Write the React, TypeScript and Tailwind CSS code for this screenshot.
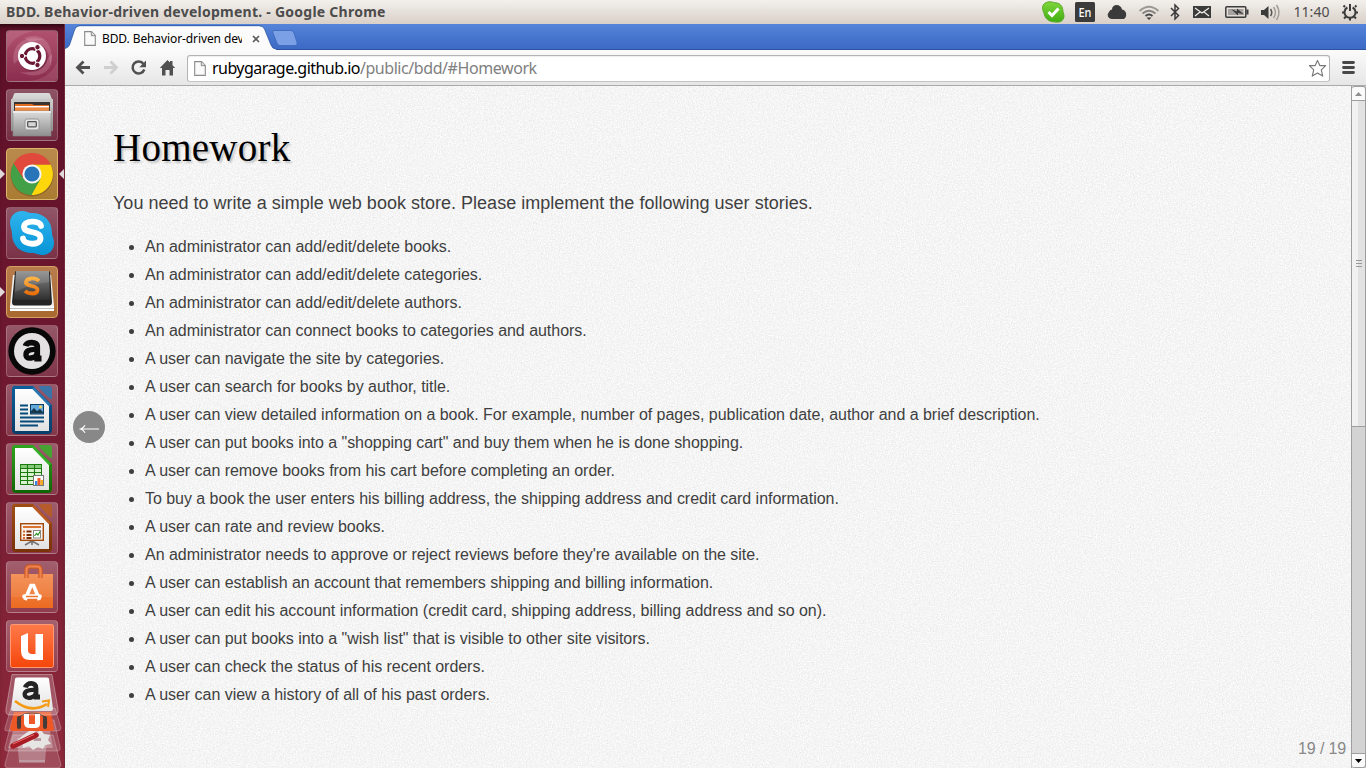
import React from "react";

const stories = [
  "An administrator can add/edit/delete books.",
  "An administrator can add/edit/delete categories.",
  "An administrator can add/edit/delete authors.",
  "An administrator can connect books to categories and authors.",
  "A user can navigate the site by categories.",
  "A user can search for books by author, title.",
  "A user can view detailed information on a book. For example, number of pages, publication date, author and a brief description.",
  "A user can put books into a \"shopping cart\" and buy them when he is done shopping.",
  "A user can remove books from his cart before completing an order.",
  "To buy a book the user enters his billing address, the shipping address and credit card information.",
  "A user can rate and review books.",
  "An administrator needs to approve or reject reviews before they're available on the site.",
  "A user can establish an account that remembers shipping and billing information.",
  "A user can edit his account information (credit card, shipping address, billing address and so on).",
  "A user can put books into a \"wish list\" that is visible to other site visitors.",
  "A user can check the status of his recent orders.",
  "A user can view a history of all of his past orders.",
];

function Gradients() {
  const list: [string, string, string][] = [
    ["gGray", "#dcdcdc", "#8f8f8f"],
    ["gSkype", "#2fb4ee", "#0794d6"],
    ["gSub", "#8a8a8a", "#2e2e2e"],
    ["gOrange", "#ffb347", "#e8700c"],
    ["gBlue", "#0a5f9c", "#073e68"],
    ["gGreen", "#2fa51c", "#106604"],
    ["gBrown", "#a04e14", "#7a3206"],
    ["gPaper", "#ffffff", "#e2e2e2"],
    ["gBag", "#f28a4d", "#ec6a22"],
    ["gUone", "#ff7a4a", "#f4460b"],
    ["gSkypeG", "#7fd63c", "#3fae12"],
    ["gDash", "#b0526f", "#8b2d4e"],
  ];
  return (
    <svg className="absolute size-0" aria-hidden="true">
      <defs>
        {list.map(([id, a, b]) => (
          <linearGradient id={id} key={id} x1="0" y1="0" x2="0" y2="1">
            <stop offset="0" stopColor={a} />
            <stop offset="1" stopColor={b} />
          </linearGradient>
        ))}
      </defs>
    </svg>
  );
}

const svg52 = "block size-[50px]";

function Dash() {
  return (
    <svg className={svg52} viewBox="1 1 50 50">
      <rect x="1" y="1" width="50" height="50" rx="3" fill="url(#gDash)" />
      <g fill="#f0c3d0" fillOpacity=".22">
        <path d="M8 34C4 14 20 4 38 10C26 9 14 16 12 30Z" />
        <path d="M18 8C38 0 50 16 44 36C45 22 38 12 24 12Z" />
        <path d="M46 24C48 44 30 50 14 42C28 44 40 38 42 28Z" />
        <path d="M1 1H28C16 3 6 9 1 20Z" fillOpacity=".14" />
        <path d="M51 51H22C36 50 46 44 51 32Z" fillOpacity=".14" />
      </g>
      <circle cx="27" cy="27" r="14.500" fill="#4a0d22" opacity=".35" />
      <circle cx="26" cy="26" r="14" fill="#fff" />
      <circle cx="26.500" cy="26" r="7.300" fill="none" stroke="#6b1834" strokeWidth="3.200" strokeDasharray="13.800 1.500" strokeDashoffset="6.900" />
      <g fill="#6b1834" stroke="#fff" strokeWidth="1"><circle cx="16" cy="26" r="2.700" /><circle cx="31.500" cy="17.200" r="2.700" /><circle cx="31.500" cy="35" r="2.700" /></g>
    </svg>
  );
}

function Files() {
  return (
    <svg className={svg52} viewBox="1 1 50 50">
      <path d="M8 5Q8 4 10 4H42Q44 4 44 5L47 13V42H5V13Z" fill="url(#gGray)" />
      <path d="M5 10H47V13H5Z" fill="#c7c7c7" />
      <rect x="8" y="13" width="36" height="11" fill="#3a3330" />
      <path d="M9 15H26L28 16H43V24H9Z" fill="#e26b22" />
      <rect x="9" y="17" width="34" height="1.500" fill="#fff" />
      <path d="M9 19H43V24H9Z" fill="#f08b45" />
      <path d="M7 22H45V47H7Z" fill="url(#gGray)" stroke="#8c8c8c" strokeWidth=".6" />
      <path d="M7 22H45V24H7Z" fill="#ececec" />
      <rect x="19" y="30" width="14" height="11" rx="2" fill="#e4e4e4" stroke="#969696" />
      <rect x="21.700" y="32.700" width="8.600" height="5.200" rx=".8" fill="#d7d7d7" stroke="#555" strokeWidth="1.300" />
    </svg>
  );
}

function ChromeLogo() {
  return (
    <svg className={svg52} viewBox="1 1 50 50">
      <circle cx="26" cy="27" r="21.500" fill="#5a3b10" opacity=".35" />
      <path d="M26 16.500H44.600A21 21 0 0 1 25 47L34.500 30.800Z" fill="#fdd60c" />
      <path d="M7.800 15.400A21 21 0 0 0 25.500 47L34.300 31 17.700 31Z" fill="#43a047" />
      <path d="M7.800 15.400L17.700 31 26 16.500H44.600A21 21 0 0 0 7.800 15.400Z" fill="#e1493c" />
      <circle cx="26" cy="26" r="9.600" fill="#f5f5f5" />
      <circle cx="26" cy="26" r="7.600" fill="#2874b8" />
    </svg>
  );
}

function Skype() {
  return (
    <svg className={svg52} viewBox="1 1 50 50">
      <path d="M16 4C20 4 22 6 26 6C38 6 46 14 46 26C46 29 48 31 48 36C48 43 43 48 37 48C32 48 30 46 26 46C14 46 6 38 6 27C6 23 4 20 4 16C4 9 9 4 16 4Z" fill="url(#gSkype)" />
      <path d="M35 19C34 13 18 13 18 20C18 27 35 23 34.500 31.500C34 39 18 38 17 31.500" fill="none" stroke="#fff" strokeWidth="5.800" strokeLinecap="round" />
    </svg>
  );
}

function Sublime() {
  return (
    <svg className={svg52} viewBox="1 1 50 50">
      <path d="M7 9H45L48 40V44H4V40Z" fill="#f1f1f1" />
      <path d="M4 40H48V45H4Z" fill="#fdfdfd" /><path d="M4 42.500H48" stroke="#aaa" strokeWidth=".8" />
      <path d="M9 6Q9 5 11 5H42Q44 5 44 6L46 36Q46 39.500 43 39.500H9Q6 39.500 6 36Z" fill="#242424" />
      <path d="M10 5H43L44 32Q44 34 42 34H10Q8 34 8 32Z" fill="url(#gSub)" />
      <path d="M10 5H43L43.500 16Q24 18 9 26Z" fill="#fff" opacity=".12" />
      <path d="M33 15C29 11 21 12 20 16C19 21 32 19 31.500 24C31 29 22 28 19 25" fill="none" stroke="url(#gOrange)" strokeWidth="3.800" />
    </svg>
  );
}

function DarkA() {
  return (
    <svg className={svg52} viewBox="1 1 50 50">
      <circle cx="26" cy="26" r="23.700" fill="#080808" />
      <circle cx="26" cy="26" r="18" fill="#e3e1e1" />
      <g fill="none" stroke="#0b0b0b"><path d="M19.500 21C20.500 16.500 31.700 16 31.200 22V33.500H35.500" strokeWidth="5.800" /><path d="M31 24.500C23 24 19.500 26 20 30.500C21 35 29 33 31 29.500" strokeWidth="5.400" /></g>
    </svg>
  );
}

function Doc({ fill, fold, children }: { fill: string; fold: string; children: React.ReactNode }) {
  return (
    <svg className={svg52} viewBox="1 1 50 50">
      <path d="M6 5Q6 2 9 2H27L46 21V46Q46 50 42 50H10Q6 50 6 46Z" fill={fill} />
      <path d="M9 5H27L43 22V47H9Z" fill="url(#gPaper)" />
      <path d="M27 4L44 21.500" stroke={fold} strokeWidth="2.500" />
      <path d="M33 2H43Q46 2 46 5V15Q44 15 42 13L34 5Q33 4 33 2Z" fill={fold} opacity=".85" />
      {children}
    </svg>
  );
}

function Writer() {
  return (
    <Doc fill="url(#gBlue)" fold="#2b79b3">
      <path d="M14 21.500H22M14 25.500H22M14 29.500H22M14 33.500H38M14 37.500H38M14 41.500H32" stroke="#074b7d" strokeWidth="1.900" />
      <rect x="24.500" y="20.500" width="13" height="9.500" fill="#63a8db" stroke="#093e65" />
      <path d="M25 29.500V27L28 24L31 27L34 25L37 28V29.500Z" fill="#16384f" /><circle cx="34.500" cy="23" r="1.400" fill="#ffd24d" />
    </Doc>
  );
}

function Calc() {
  return (
    <Doc fill="url(#gGreen)" fold="#38b028">
      <rect x="14.500" y="21.500" width="21" height="20" fill="#d9f3cf" stroke="#1b7a0e" />
      <path d="M14 22H36V25H14Z" fill="#38a12a" opacity=".5" />
      <path d="M14 25.500H36M14 29.500H36M14 33.500H36M14 37.500H36M21.500 21V42M28.500 21V42" stroke="#1b7a0e" strokeWidth="1.100" />
      <rect x="27.500" y="32.500" width="10" height="10" fill="#fff" stroke="#777" />
      <path d="M29 38H31.500V42H29Z" fill="#2e8be0" /><path d="M31.500 35H34.500V42H31.500Z" fill="#f0582b" /><path d="M34.500 37H37V42H34.500Z" fill="#f3ab1d" />
    </Doc>
  );
}

function Impress() {
  return (
    <Doc fill="url(#gBrown)" fold="#bb5c22">
      <path d="M26 39L19 43M26 39L33 43M26 39V43" stroke="#777" strokeWidth="1.700" />
      <rect x="14.700" y="21.700" width="22.600" height="16.600" fill="#faf1ea" stroke="#a1480d" strokeWidth="1.400" />
      <path d="M17 25H35" stroke="#d97331" strokeWidth="2" />
      <path d="M17 29.500H19M17 33H19M17 36H19" stroke="#d96a2b" strokeWidth="1.800" /><path d="M20.500 29.500H25.500M20.500 33H25.500M20.500 36H25.500" stroke="#7b2e05" strokeWidth="1.800" />
      <rect x="27.500" y="28.500" width="7" height="7.500" fill="#fff" stroke="#888" /><path d="M28.500 34L30.500 31.500L32 33L34 29.500" stroke="#2a9121" strokeWidth="1.200" fill="none" />
    </Doc>
  );
}

function Software() {
  return (
    <svg className={svg52} viewBox="1 1 50 50">
      <path d="M5 13H47V47H5Z" fill="url(#gBag)" />
      <path d="M5 13H47V36H5Z" fill="#fff" opacity=".08" />
      <path d="M20.500 17V9Q20.500 5.500 24 5.500H31Q34.500 5.500 34.500 9V17" fill="none" stroke="#cf5a22" strokeWidth="4.400" />
      <path d="M20.500 17V9Q20.500 5.500 24 5.500H31Q34.500 5.500 34.500 9V17" fill="none" stroke="#ec8350" strokeWidth="2.200" />
      <path d="M19 39L25 24.500H27.600L33.500 39" fill="none" stroke="#fff" strokeWidth="3.600" />
      <path d="M18.500 35.500H33.500" stroke="#fff" strokeWidth="4.600" strokeLinecap="round" /><path d="M20 35.500H32" stroke="#ed7330" strokeWidth="1.500" />
    </svg>
  );
}

function UbuntuOne() {
  return (
    <svg className={svg52} viewBox="1 1 50 50">
      <rect x="4.500" y="4.500" width="43" height="43" rx="2" fill="url(#gUone)" stroke="#ff9b72" />
      <path d="M15 16L22 13V30Q22 34 26 34H29.500V14H37V40H24Q15 40 15 31Z" fill="#fff" />
    </svg>
  );
}

function FoldedStack() {
  return (
    <svg className="block h-[96px] w-[65px]" viewBox="0 672 65 96">
      <g fill="#fff" fillOpacity=".16" stroke="#fff" strokeOpacity=".25">
        <path d="M13 735H53L61 765Q61 768 57 768H7Q4 767 5 764Z" />
        <path d="M12 720H54L60 747Q61 751 57 751H7Q4 751 5 747Z" />
        <path d="M11 708H55L61 728Q61 731 57 731H7Q4 731 5 728Z" />
      </g>
      <path d="M17 738H47L45 762H19Z" fill="#ddd" opacity=".35" /><path d="M19 760H45V763H19Z" fill="#ddd" opacity=".3" />
      <path d="M13 731H50L53 748H8Z" fill="#f5f5f5" opacity=".3" />
      <path d="M26 733L31 730L37 732L41 730L44 734L50 735L48 740L51 744L45 745L43 749L38 747L33 750L29 746L23 748L22 743L17 741L21 737Z" fill="#e7e5e4" /><path d="M33 738H41V741H34Z" fill="#b99aa1" />
      <path d="M13 746L36 735" stroke="#a81c25" strokeWidth="5.500" strokeLinecap="round" /><path d="M13 744L34 734.500" stroke="#ef6c68" strokeWidth="1" />
      <path d="M14 712H51L54 729Q54 731 52 731H12Q10 731 10 728Z" fill="#ee5726" />
      <path d="M20 727C14 722 19 713 32 713C45 713 50 722 44 727" fill="none" stroke="#433" strokeWidth="1.200" /><path d="M19 718V727M45 718V727" stroke="#453b39" strokeWidth="4" strokeLinecap="round" />
      <path d="M24 714H29V724H35V714H40V724Q40 728 35 728H30Q24 728 24 723Z" fill="#fff" />
      <path d="M12 674.500H52L58 709Q59 715 53 715H10Q5 715 6 709Z" fill="#fff" fillOpacity=".22" stroke="#fff" strokeOpacity=".35" />
      <path d="M15 679Q15 677.500 17 677.500H47Q49 677.500 49 679L53 709Q53 711 51 711H13Q11 711 11 709Z" fill="url(#gPaper)" />
      <g fill="none" stroke="#252525"><path d="M25.500 687.500C26.500 682 36.500 682 36 688V697H40" strokeWidth="4.800" /><path d="M36 690C27 689 23.500 692 25 696C28 700 34 697 36 694" strokeWidth="4.200" /></g>
      <path d="M15 701Q31 714 47 704" fill="none" stroke="#f59a13" strokeWidth="2.600" /><path d="M42 701.500L49 700.500L48 707" fill="none" stroke="#f59a13" strokeWidth="2" />
    </svg>
  );
}

type Item = { name: string; icon: () => React.ReactElement; bg: string; left?: boolean; right?: boolean };
const glass = "border-white/20 bg-white/12 bg-linear-to-b from-white/18 to-transparent";
const items: Item[] = [
  { name: "Dash", icon: Dash, bg: glass },
  { name: "Files", icon: Files, bg: glass },
  { name: "Chrome", icon: ChromeLogo, bg: "border-[#dcb76b] bg-linear-to-b from-[#ba8a4d] to-[#a97b32]", left: true, right: true },
  { name: "Skype", icon: Skype, bg: glass },
  { name: "Sublime Text", icon: Sublime, bg: "border-[#d7a064] bg-linear-to-b from-[#b87c4c] to-[#a8692f]", left: true },
  { name: "Editor", icon: DarkA, bg: glass },
  { name: "Writer", icon: Writer, bg: glass },
  { name: "Calc", icon: Calc, bg: glass },
  { name: "Impress", icon: Impress, bg: glass },
  { name: "Software Center", icon: Software, bg: glass },
  { name: "Ubuntu One", icon: UbuntuOne, bg: glass },
];

function Launcher() {
  return (
    <aside className="flex w-[65px] shrink-0 flex-col overflow-hidden border-r border-[#722a3c] bg-linear-to-b from-[#5d0f28] via-[#701a31] to-[#8e293b] pt-[6px] shadow-[inset_0_5px_5px_-3px_rgba(0,0,0,.6)]">
      <div className="flex flex-col gap-[7px]">
        {items.map(({ name, icon: Icon, bg, left, right }) => (
          <div key={name} className="flex h-[52px] items-center">
            <svg className="h-[10px] w-[6px]" viewBox="0 0 6 10">{left && <path d="M0 0L5 5L0 10Z" fill="#e2d9dc" />}</svg>
            <div className={`size-[52px] overflow-hidden rounded-[4px] border ${bg}`}><Icon /></div>
            <svg className="h-[10px] w-[6px]" viewBox="0 0 6 10">{right && <path d="M6 0L1 5L6 10Z" fill="#e2d9dc" />}</svg>
          </div>
        ))}
      </div>
      <FoldedStack />
    </aside>
  );
}

function TopBar() {
  return (
    <header className="flex h-6 shrink-0 items-center justify-between bg-linear-to-b from-[#f3f0ec] to-[#d9d0c8] pr-[7px] pl-[6px] font-['Noto_Sans',sans-serif] text-[#4c4c4c]">
      <div className="w-[400px] text-[14px] leading-6 font-bold tracking-[0.250px] whitespace-nowrap">BDD. Behavior-driven development. - Google Chrome</div>
      <div className="flex h-6 items-center">
        <svg className="block h-6 w-[317px]" viewBox="1042 0 317 24" fill="none">
          <path d="M1048 2C1051 1 1054 3 1057 3C1062 4 1063 9 1063 12C1066 18 1062 23 1056 22C1049 22 1045 19 1044 13C1041 7 1043 3 1048 2Z" fill="url(#gSkypeG)" stroke="#58a928" />
          <path d="M1048.500 12L1052 15.500L1058.500 8.500" stroke="#fff" strokeWidth="3" />
          <rect x="1075" y="2" width="20" height="20" rx="1.500" fill="#3b3b3b" />
          <text x="1085" y="17" textAnchor="middle" fontSize="12" textLength="13" lengthAdjust="spacingAndGlyphs" fontWeight="500" fill="#fff" fontFamily="Noto Sans, sans-serif">En</text>
          <path d="M1112 19A4 4 0 0 1 1109 12A4 4 0 0 1 1112 9.500C1112 3.500 1121 3.500 1122 9.500C1127 10 1127.500 17 1124 19Z" fill="#3b3b3b" />
          <g strokeWidth="1.800"><path d="M1139.500 11Q1149 2.500 1158.500 11" stroke="#9b9894" /><path d="M1142.500 13.500Q1149 8 1155.500 13.500" stroke="#858280" /><path d="M1145.500 16Q1149 13 1152.500 16" stroke="#444" /></g>
          <path d="M1146.500 17.500H1151.500L1149 20Z" fill="#3b3b3b" />
          <path d="M1171 8L1178.500 15.500L1175 19V5L1178.500 8.500L1171 16" stroke="#3b3b3b" strokeWidth="1.500" />
          <rect x="1193" y="6" width="18" height="12" fill="#3b3b3b" />
          <path d="M1195 8L1202 13L1209 8M1195 16L1200 12M1209 16L1204 12" stroke="#f4f1ed" strokeWidth="1.100" />
          <rect x="1225.800" y="6.800" width="20" height="10.500" rx="1" stroke="#3b3b3b" strokeWidth="1.500" /><rect x="1228" y="9" width="15.500" height="6" fill="#a5a29f" /><rect x="1246.500" y="9.500" width="2" height="5" fill="#3b3b3b" />
          <path d="M1231 9L1237 11.500V8.500L1244 14.500L1238 12.800V15.500Z" fill="#3b3b3b" />
          <path d="M1261 10H1264L1268.500 6V19L1264 15H1261Z" fill="#3b3b3b" />
          <path d="M1270.500 9Q1273 12.500 1270.500 16" stroke="#555" strokeWidth="1.500" /><path d="M1273.500 7Q1277.500 12.500 1273.500 18M1276.500 5Q1281.500 12.500 1276.500 20" stroke="#9f9b97" strokeWidth="1.500" />
          <text x="1293.500" y="17" fontSize="14" textLength="36" fill="#4c4c4c" fontFamily="Noto Sans, sans-serif">11:40</text>
          <path d="M1347.400 7.500A5.500 5.500 0 1 0 1352.600 7.500" stroke="#3b3b3b" strokeWidth="2" />
          <path d="M1350 4V11M1345 7L1343.500 5.500M1355 7L1356.500 5.500M1344.500 12.500H1342M1355.500 12.500H1358M1346 16.500L1344 18.500M1354 16.500L1356 18.500M1350 18V20.500" stroke="#3b3b3b" strokeWidth="2" />
        </svg>
      </div>
    </header>
  );
}

function PageIcon() {
  return (
    <svg className="block h-[15px] w-[12px] shrink-0" viewBox="0 0 12 15"><path d="M.7.600H7.500L11.300 4.500V14.400H.7Z" fill="#fafafa" stroke="#8a8a8a" strokeWidth="1.100" /><path d="M7.300.600V4.700H11.300" fill="#ddd" stroke="#8a8a8a" /></svg>
  );
}

function TabStrip() {
  return (
    <div className="relative flex h-[26px] shrink-0 items-center bg-linear-to-b from-[#5584d9] to-[#3e6cc7] to-85% pt-[3px] pl-[19px] font-['Noto_Sans',sans-serif]">
      <svg className="absolute top-0 left-0 h-[26px] w-full" viewBox="0 0 1301 26" preserveAspectRatio="none">
        <path d="M0 25.500H1301" stroke="#2b529b" />
        <path d="M0 26V24.500Q3 24 4.500 21L9.500 6Q11 2 15 2H194Q198 2 199.500 5L206 21Q207.500 25 211 25V26Z" fill="#fbfbfb" />
        <path d="M0 24.500Q3 24 4.500 21L9.500 6Q11 1.700 15 1.700H194Q198 1.700 199.500 5L206 21Q207.500 25 211 25" fill="none" stroke="#2d559f" strokeWidth=".8" />
        <path d="M209 6.500H226Q228 6.500 229 9L232 18.500Q233 21.500 230 21.500H215Q213 21.500 212 19L208 9Q207 6.500 209 6.500Z" fill="#7ba0e5" stroke="#3b67ba" strokeWidth=".8" />
      </svg>
      <span className="relative"><PageIcon /></span>
      <span className="relative ml-[6px] w-[140px] overflow-hidden text-[12px] leading-5 tracking-[-0.100px] whitespace-nowrap text-black">BDD. Behavior-driven development.</span>
      <svg className="relative ml-[10px] size-[8px]" viewBox="0 0 8 8"><path d="M1 1L7 7M7 1L1 7" stroke="#5d5d5d" strokeWidth="1.700" /></svg>
    </div>
  );
}

function Toolbar() {
  return (
    <div className="flex h-9 shrink-0 items-center border-b border-[#aaa] bg-linear-to-b from-[#fbfbfb] to-[#e6e6e6] pr-[10px] pl-[10px]">
      <svg className="block h-[36px] w-[112px] shrink-0" viewBox="75 50 112 36" fill="none">
        <path d="M90 67.500H78M83.500 61.500L77.500 67.500L83.500 73.500" stroke="#505050" strokeWidth="2.800" />
        <path d="M104 67.500H116M110.500 61.500L116.500 67.500L110.500 73.500" stroke="#cfcfcf" strokeWidth="2.800" />
        <path d="M143.500 64A6 6 0 1 0 144.300 69.500" stroke="#505050" strokeWidth="2.500" /><path d="M146 60.500V67.300H139.300Z" fill="#505050" />
        <path d="M159.800 68L167.500 60L170 62.500V61H172.500V65.200L175.200 68H173V75.500H169.500V70H165.500V75.500H162V68Z" fill="#505050" />
      </svg>
      <div className="mt-px flex h-[27px] w-[1143px] items-center rounded-[3px] border border-[#b3b3b3] border-b-[#c4c4c4] bg-white pr-[2px] pl-[6px] shadow-[inset_0_1px_1px_#eee]">
        <PageIcon />
        <span className="ml-[6px] flex-1 font-['Noto_Sans',sans-serif] text-[16px] leading-6 tracking-[-0.430px] text-[#808080]"><span className="tracking-[-0.550px] text-black">rubygarage.github.io</span>/public/bdd/#Homework</span>
        <svg className="size-[19px]" viewBox="0 0 20 20"><path d="M10 1.500L12.600 7H18.500L14 11.500L15.500 18L10 14.700L4.500 18L6 11.500L1.500 7H7.400Z" fill="#fff" stroke="#777" strokeWidth="1.200" strokeLinejoin="round" /></svg>
      </div>
      <svg className="ml-[12px] h-[13px] w-[13px] shrink-0" viewBox="0 0 13 13"><path d="M1.500 1.500H11.500M1.500 6.500H11.500M1.500 11.500H11.500" stroke="#484848" strokeWidth="2.800" strokeLinecap="round" /></svg>
    </div>
  );
}

function Scrollbar() {
  return (
    <div className="flex w-[15px] shrink-0 flex-col border-l border-[#9e9e9e] bg-[#d3d3d3]">
      <div className="flex h-[15px] items-center justify-center rounded-t-[3px] border-y border-r border-[#9e9e9e] bg-[#fafafa]"><svg className="h-1 w-[7px]" viewBox="0 0 7 4"><path d="M0 4L3.500 0L7 4Z" fill="#8e8e8e" /></svg></div>
      <div className="flex h-[326px] items-center justify-center border-r border-b border-[#9e9e9e] bg-linear-to-r from-[#f1f1f1] from-50% to-[#e2e2e2] to-50%"><svg className="h-[7px] w-[6px]" viewBox="0 0 6 7"><path d="M0 .5H6M0 3.500H6M0 6.500H6" stroke="#999" /></svg></div>
      <div className="flex-1 border-r border-[#a5a5a5]" />
      <div className="flex h-[15px] items-center justify-center rounded-b-[3px] border border-l-0 border-[#9e9e9e] bg-[#fafafa]"><svg className="h-1 w-[7px]" viewBox="0 0 7 4"><path d="M0 0L3.500 4L7 0Z" fill="#000" /></svg></div>
    </div>
  );
}

function Slide() {
  return (
    <main className="relative min-w-0 flex-1 overflow-hidden bg-[#f5f5f5] pt-[40px] pl-[48px] font-['Liberation_Sans',Arial,sans-serif] text-[#3f3f3f]">
      <svg className="absolute inset-0 size-full" aria-hidden="true">
        <filter id="paper" x="0" y="0" width="100%" height="100%" colorInterpolationFilters="sRGB">
          <feTurbulence type="fractalNoise" baseFrequency=".73" numOctaves="4" seed="4" stitchTiles="stitch" />
          <feColorMatrix values="0.130 0 0 0 0.894 0.130 0 0 0 0.894 0.130 0 0 0 0.894 0 0 0 0 1" />
        </filter>
        <rect width="100%" height="100%" filter="url(#paper)" />
      </svg>
      <div className="relative">
        <h1 className="h-[44px] font-['Liberation_Serif',serif] text-[39px] leading-[43px] tracking-[0.250px] text-black [text-shadow:2px_2px_2px_rgba(0,0,0,.2)]">Homework</h1>
        <p className="mt-[19px] text-[18px] leading-[28px] tracking-[0.012px] whitespace-nowrap">You need to write a simple web book store. Please implement the following user stories.</p>
        <ul className="mt-[16px] list-disc pl-[32px] text-[16px] leading-[28px] tracking-[-0.035px] whitespace-nowrap">
          {stories.map((s) => <li key={s}>{s}</li>)}
        </ul>
      </div>
      <button className="absolute top-[325px] left-[8px] flex size-8 items-center justify-center rounded-full bg-[#888]" aria-label="Previous">
        <svg className="size-8" viewBox="0 0 32 32"><path d="M26 18H8M12 14.300Q10.500 17 7.500 18Q10.500 19 12 21.700" fill="none" stroke="#fff" strokeWidth="1.200" /></svg>
      </button>
      <div className="absolute right-[5px] bottom-[7px] text-[16px] leading-6 tracking-[-0.150px] text-[#888]">19 / 19</div>
    </main>
  );
}

export default function App() {
  return (
    <div className="flex h-[768px] w-[1366px] flex-col overflow-hidden">
      <Gradients />
      <TopBar />
      <div className="flex min-h-0 flex-1">
        <Launcher />
        <section className="flex min-w-0 flex-1 flex-col">
          <TabStrip />
          <Toolbar />
          <div className="flex min-h-0 flex-1"><Slide /><Scrollbar /></div>
        </section>
      </div>
    </div>
  );
}
